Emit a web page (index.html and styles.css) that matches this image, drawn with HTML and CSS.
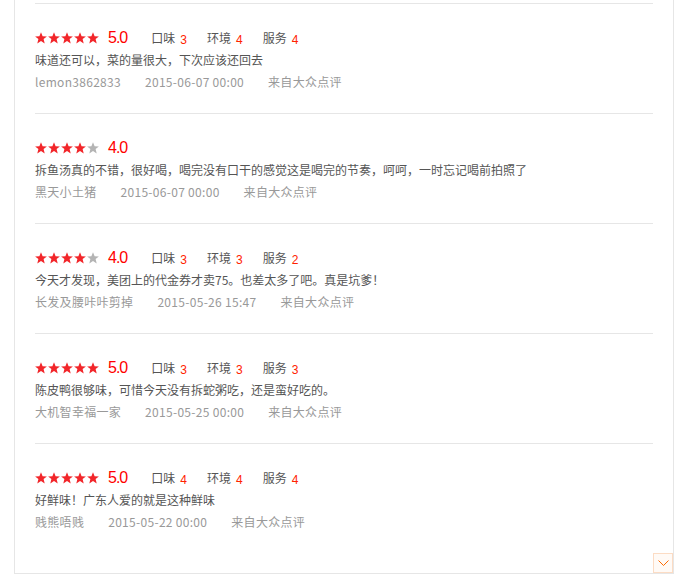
FILE: index.html
```html
<!DOCTYPE html>
<html lang="zh-CN">
<head>
<meta charset="utf-8">
<title>评价</title>
<link rel="stylesheet" href="styles.css">
</head>
<body>
<div class="panel">
  <ul class="list">
    <li class="item">
      <div class="rate">
        <span class="stars s5"></span>
        <span class="score">5.0</span>
        <span class="sub">口味<em>3</em></span>
        <span class="sub">环境<em>4</em></span>
        <span class="sub">服务<em>4</em></span>
      </div>
      <p class="text">味道还可以，菜的量很大，下次应该还回去</p>
      <div class="meta"><span>lemon3862833</span><span>2015-06-07 00:00</span><span>来自大众点评</span></div>
    </li>
    <li class="item">
      <div class="rate">
        <span class="stars s4"></span>
        <span class="score">4.0</span>
      </div>
      <p class="text">拆鱼汤真的不错，很好喝，喝完没有口干的感觉这是喝完的节奏，呵呵，一时忘记喝前拍照了</p>
      <div class="meta"><span>黑天小土猪</span><span>2015-06-07 00:00</span><span>来自大众点评</span></div>
    </li>
    <li class="item">
      <div class="rate">
        <span class="stars s4"></span>
        <span class="score">4.0</span>
        <span class="sub">口味<em>3</em></span>
        <span class="sub">环境<em>3</em></span>
        <span class="sub">服务<em>2</em></span>
      </div>
      <p class="text">今天才发现，美团上的代金券才卖75。也差太多了吧。真是坑爹！</p>
      <div class="meta"><span>长发及腰咔咔剪掉</span><span>2015-05-26 15:47</span><span>来自大众点评</span></div>
    </li>
    <li class="item">
      <div class="rate">
        <span class="stars s5"></span>
        <span class="score">5.0</span>
        <span class="sub">口味<em>3</em></span>
        <span class="sub">环境<em>3</em></span>
        <span class="sub">服务<em>3</em></span>
      </div>
      <p class="text">陈皮鸭很够味，可惜今天没有拆蛇粥吃，还是蛮好吃的。</p>
      <div class="meta"><span>大机智幸福一家</span><span>2015-05-25 00:00</span><span>来自大众点评</span></div>
    </li>
    <li class="item">
      <div class="rate">
        <span class="stars s5"></span>
        <span class="score">5.0</span>
        <span class="sub">口味<em>4</em></span>
        <span class="sub">环境<em>4</em></span>
        <span class="sub">服务<em>4</em></span>
      </div>
      <p class="text">好鲜味！广东人爱的就是这种鲜味</p>
      <div class="meta"><span>贱熊唔贱</span><span>2015-05-22 00:00</span><span>来自大众点评</span></div>
    </li>
  </ul>
  <a class="more" href="#" aria-label="更多">
    <svg width="11" height="6" viewBox="0 0 11 6"><polyline points="0.5,0.5 5.5,5.5 10.5,0.5" fill="none" stroke="#ff6a00" stroke-width="1"/></svg>
  </a>
</div>
</body>
</html>
```
FILE: styles.css
```css
html, body { margin: 0; padding: 0; background: #fff; }
body { font-family: "Noto Sans CJK SC", "Liberation Sans", sans-serif; font-size: 12px; color: #555; }
.panel {
  position: relative;
  margin-left: 14px;
  width: 660px;
  height: 574px;
  box-sizing: border-box;
  border: 1px solid #e6e6e6;
  border-top: 0;
  padding: 3px 20px 0;
}
.list { list-style: none; margin: 0; padding: 0; height: 100%; display: flex; flex-direction: column; }
.item {
  box-sizing: border-box;
  height: 110px;
  border-top: 1px solid #e6e6e6;
  padding-top: 24px;
  flex: none;
}
.item:last-child { flex: 1; }
.rate { display: flex; align-items: center; height: 20px; }
.stars {
  display: inline-block;
  width: 64px; height: 12px;
  background-repeat: no-repeat;
}
.s5 {
  background-image: url("data:image/svg+xml;utf8,<svg xmlns='http://www.w3.org/2000/svg' width='64' height='12' viewBox='0 0 64 12'><defs><polygon id='s' points='6,0.2 7.6,4.2 11.9,4.4 8.6,7.1 9.7,11.4 6,9 2.3,11.4 3.4,7.1 0.1,4.4 4.4,4.2'/></defs><use href='%23s' fill='%23f2262a'/><use href='%23s' x='13' fill='%23f2262a'/><use href='%23s' x='26' fill='%23f2262a'/><use href='%23s' x='39' fill='%23f2262a'/><use href='%23s' x='52' fill='%23f2262a'/></svg>");
}
.s4 {
  background-image: url("data:image/svg+xml;utf8,<svg xmlns='http://www.w3.org/2000/svg' width='64' height='12' viewBox='0 0 64 12'><defs><polygon id='s' points='6,0.2 7.6,4.2 11.9,4.4 8.6,7.1 9.7,11.4 6,9 2.3,11.4 3.4,7.1 0.1,4.4 4.4,4.2'/></defs><use href='%23s' fill='%23f2262a'/><use href='%23s' x='13' fill='%23f2262a'/><use href='%23s' x='26' fill='%23f2262a'/><use href='%23s' x='39' fill='%23f2262a'/><use href='%23s' x='52' fill='%23b4b4b4'/></svg>");
}
.score {
  margin-left: 9px;
  margin-right: 4px;
  font-family: "Liberation Sans", sans-serif;
  font-size: 16px;
  letter-spacing: -1px;
  color: #f00;
  line-height: 20px;
}
.sub { margin-left: 20px; color: #555; font-size: 12px; line-height: 20px; }
.sub em { font-style: normal; color: #f20; margin-left: 5px; font-family: "Liberation Sans", sans-serif; font-size: 12px; position: relative; top: 1px; }
.text { margin: 1px 0 0; line-height: 22px; color: #555; }
.meta { line-height: 22px; color: #999; letter-spacing: 0.3px; }
.meta span { margin-right: 24px; }
.more {
  position: absolute;
  right: 0; bottom: 0;
  width: 20px; height: 20px;
  box-sizing: border-box;
  border: 1px solid #fcdcc4;
  background: #fffaf6;
  display: flex; align-items: center; justify-content: center;
}
```
